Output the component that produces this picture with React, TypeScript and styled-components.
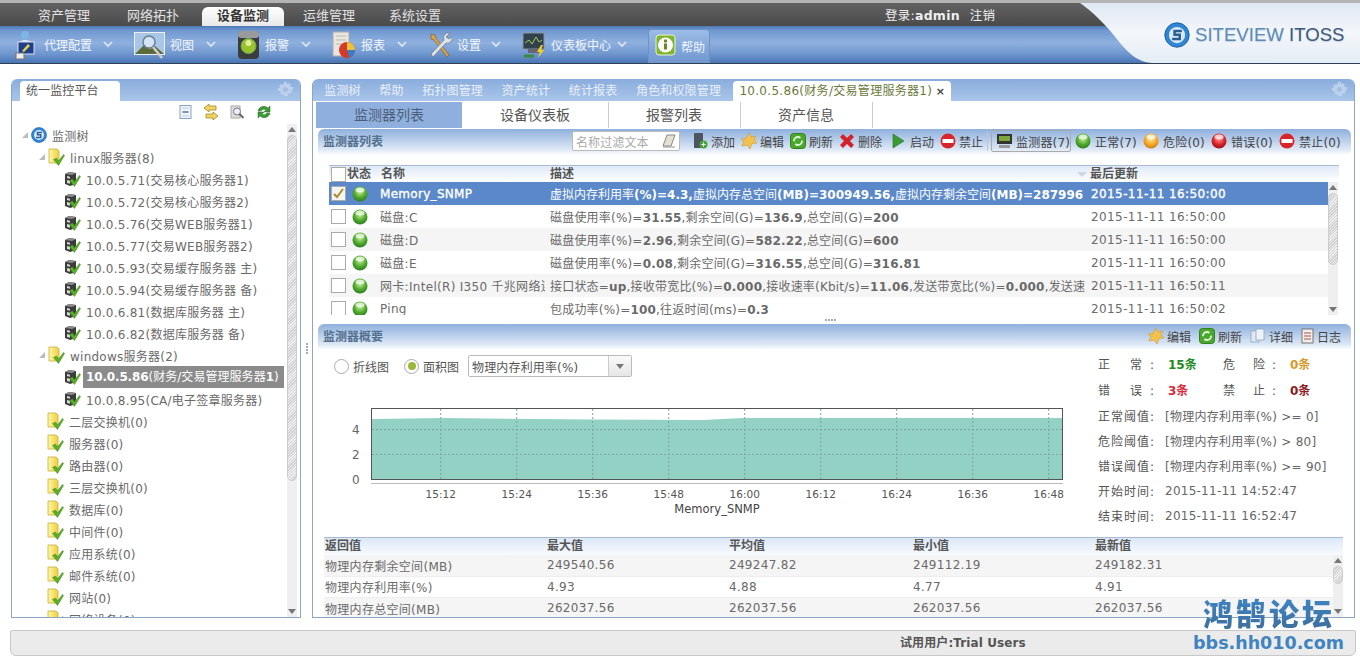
import React from 'react';
import styled, { createGlobalStyle } from 'styled-components';

const Global = createGlobalStyle`
  html, body { margin: 0; padding: 0; background: #fff; }
  body { font: 12px "DejaVu Sans", "Noto Sans CJK SC", sans-serif; color: #6a6a6a; letter-spacing: .25px; overflow: hidden; }
`;

const Page = styled.div`width: 1360px; height: 670px; position: relative; overflow: hidden; display: flex; flex-direction: column;`;
const Header = styled.header`height: 60px; margin-top: 3px; position: relative; display: flex; flex-direction: column; border-bottom: 1px solid #2f3f55; flex: none;`;
const TopStrip = styled.div`position: absolute; top: -3px; left: 0; right: 0; height: 3px; background: #b4b4b4;`;
const NavBar = styled.div`height: 23px; flex: none; background: linear-gradient(#626262, #4a4a4a); display: flex; align-items: flex-end; padding-left: 22px;`;
const NavTab = styled.div<{ $on?: boolean; $w?: number }>`
  width: ${p => p.$w ?? 82}px; text-align: center; line-height: 18px; font-size: 13px; letter-spacing: 0;
  color: ${p => (p.$on ? '#333' : '#e2e2e2')}; font-weight: ${p => (p.$on ? 600 : 400)};
  background: ${p => (p.$on ? 'linear-gradient(#fff,#e8e8e8)' : 'none')}; border-radius: ${p => (p.$on ? '6px 6px 0 0' : '0')};
  margin-left: ${p => (p.$on ? '2px' : '0')}; margin-right: ${p => (p.$on ? '4px' : '0')};
  padding-bottom: 2px; height: 17px;
`;
const NavUser = styled.div`margin-left: 425px; align-self: center; color: #eee; font-size: 12.5px; display: flex; gap: 10px; b { font-weight: 600; }`;
const ToolBar = styled.div`flex: 1; background: linear-gradient(#4e79b6 0%, #6f98d0 12%, #8fb0de 45%, #6f97cf 75%, #4a76b4 100%); display: flex; align-items: center; padding-left: 15px;`;
const ToolItem = styled.div<{ $w: number }>`width: ${p => p.$w}px; display: flex; align-items: center; color: #f2f6fc; gap: 5px; flex: none; letter-spacing: 0; svg { flex: none; }`;
const ToolText = styled.span`white-space: nowrap;`;
const ToolChevron = styled.span`margin-left: auto; margin-right: 21px; display: flex; color: #dfeaf8;`;
const HelpBtn = styled.div`height: 34px; width: 62px; margin-top: 2px; box-sizing: border-box; border: 1px solid #6b93c6; border-bottom: none; border-radius: 4px 4px 0 0; background: linear-gradient(#9cbbe6,#6f97cf); display: flex; align-items: center; gap: 5px; padding-left: 6px; color: #f2f6fc; letter-spacing: 0;`;
const LogoArea = styled.svg`position: absolute; right: 0; top: 0; width: 280px; height: 60px;`;
const LogoBlock = styled.div`position: absolute; left: 1164px; top: 19px; display: flex; align-items: center; gap: 5px;`;
const LogoText = styled.span`font: 18.6px "Liberation Sans", sans-serif; letter-spacing: 0; color: #5e8cb8; white-space: nowrap; text-shadow: 0 1px 1px #c6d2de; b { font-weight: 400; color: #3d5a78; }`;

const Main = styled.main`height: 539px; flex: none; margin-top: 15px; padding-left: 11px; display: flex;`;
const Panel = styled.section<{ $w: number }>`width: ${p => p.$w}px; box-sizing: border-box; border: 1px solid #8ea6c6; border-top: none; border-radius: 6px 6px 0 0; display: flex; flex-direction: column; overflow: hidden; flex: none;`;
const Strip = styled.div<{ $pad: number }>`height: 22px; flex: none; background: linear-gradient(#8aaddc, #a9c5ea); display: flex; align-items: flex-end; position: relative; border-radius: 6px 6px 0 0; margin: 0 -1px; padding-left: ${p => p.$pad}px;`;
const StripTab = styled.div`background: #fff; height: 20px; line-height: 21px; width: 88px; padding: 0 6px; border-radius: 4px 4px 0 0; color: #555; letter-spacing: .1px; white-space: nowrap;`;
const ActiveTab = styled(StripTab)`margin-left: 3px; color: #6a7a3a; width: 206px; letter-spacing: .3px; display: flex; justify-content: space-between; b { color: #444; font-size: 11px; }`;
const StripLink = styled.div`padding: 0 9.3px; height: 20px; line-height: 21px; letter-spacing: .15px; color: #e9f0fa; white-space: nowrap;`;
const GearSlot = styled.span`position: absolute; right: 8px; top: 3px; display: flex;`;
const TreeTools = styled.div`height: 22px; flex: none; display: flex; justify-content: flex-end; align-items: center; gap: 11px; padding-right: 28px;`;
const TreeBody = styled.div`flex: 1; display: flex; min-height: 0; padding-top: 1px;`;
const TreeList = styled.ul`flex: 1; list-style: none; margin: 0; padding: 0; overflow: hidden;`;
const TreeRow = styled.li<{ $lvl: number }>`height: 22px; display: flex; align-items: center; white-space: nowrap; padding-left: ${p => [10, 27, 51][p.$lvl]}px;`;
const Arrow = styled.span<{ $show?: boolean }>`width: 0; height: 0; flex: none; margin-right: ${p => (p.$show ? '1px' : '0')}; border-bottom: 6px solid #bbb; border-left: 6px solid transparent; visibility: ${p => (p.$show ? 'visible' : 'hidden')};`;
const TreeLabel = styled.span<{ $sel?: boolean }>`margin-left: 5px; ${p => (p.$sel ? 'margin-left:2px;padding:0 5px 0 3px;background:#8b8b8b;color:#fff;height:22px;line-height:22px;letter-spacing:.05px;b{font-weight:700;letter-spacing:-.15px;}' : '')}`;
const TreeIconSlot = styled.span<{ $lvl: number }>`display: flex; flex: none; margin-left: ${p => (p.$lvl === 2 ? '1px' : '2px')};`;
const VScroll = styled.div<{ $w: number; $mr?: number }>`width: ${p => p.$w}px; flex: none; background: #efefef; display: flex; flex-direction: column; align-items: center; position: relative; margin-right: ${p => p.$mr ?? 3}px;`;
const ScrollUp = styled.span`width: 0; height: 0; border: 4px solid transparent; border-top: none; border-bottom: 5px solid #777; margin: 3px 0;`;
const ScrollDown = styled.span`width: 0; height: 0; border: 4px solid transparent; border-bottom: none; border-top: 5px solid #777; margin: auto 0 3px;`;
const ScrollThumb = styled.span<{ $h: number }>`width: 100%; height: ${p => p.$h}px; border-radius: 5px; box-sizing: border-box; border: 1px solid #ccc; background: repeating-linear-gradient(135deg, #d0d0d0 0 1px, #f0f0f0 1px 2px);`;
const VSplit = styled.div`width: 11px; flex: none; display: flex; flex-direction: column; gap: 1px; align-items: center; justify-content: center; i { width: 2px; height: 2px; background: #aaa; }`;

const SubTabs = styled.div`flex: none; display: flex; padding: 1px 0 0 3px; box-sizing: border-box; height: 28px;`;
const SubTab = styled.div<{ $on?: boolean }>`padding: 0 38px; font-size: 14px; letter-spacing: 0; line-height: 27px; color: ${p => (p.$on ? '#4d5f78' : '#555')}; background: ${p => (p.$on ? '#8fb0de' : 'none')}; border-right: ${p => (p.$on ? 'none' : '1px solid #ccc')}; margin-right: ${p => (p.$on ? 0 : '-1px')}; height: 26px;`;
const SecBar = styled.div`height: 26px; flex: none; margin: 0 3px 0 5px; padding: 0 8px 0 5px; display: flex; align-items: center; border-radius: 6px 6px 0 0; background: linear-gradient(#8fb0de, #dfe9f6 80%, #fff); position: relative;`;
const SecTitle = styled.h3`margin: 0; font-size: 12px; font-weight: 700; letter-spacing: 0; color: #53708f; margin-top: -4px; flex: none; width: 249px;`;
const FilterBox = styled.div`width: 108px; height: 20px; box-sizing: border-box; margin-top: -2px; border: 1px solid #bbb; border-radius: 2px; background: #fff; display: flex; align-items: center; justify-content: space-between; padding: 0 2px 0 3px; color: #aaa; letter-spacing: .1px; flex: none; margin-right: 13px;`;
const Bar = styled.div`display: flex; align-items: center; gap: 6px; flex: none; margin-top: -2px;`;
const SideBar = styled(Bar)`margin-left: auto; gap: 8px; margin-right: 2px;`;
const BarBtn = styled.span`display: flex; align-items: center; gap: 3px; color: #444; letter-spacing: 0; white-space: nowrap;`;
const BarPlay = styled(BarBtn)`margin-left: 4px; gap: 5px;`;
const BarCount = styled(BarBtn)`letter-spacing: .2px; gap: 4px;`;
const BarSep = styled.i`width: 1px; height: 20px; background: #b8c6d8; margin: 0 0 0 -2px;`;
const BarBoxed = styled(BarBtn)`border: 1px solid #aaa; border-radius: 2px; padding: 2px 0 2px 4px; height: 16px; margin-left: -3px; margin-right: -2px; letter-spacing: .15px;`;

const GridWrap = styled.div`height: 150px; flex: none; margin: 10px 15px 0 16px; display: flex; flex-direction: column;`;
const GridHead = styled.div`height: 16px; flex: none; border-top: 1px solid #a9bbd2; background: linear-gradient(#dfe9f7,#fff); display: grid; grid-template-columns: 52px 169px 540px 1fr; color: #555; font-weight: 700; letter-spacing: 0; line-height: 16px; position: relative;`;
const HeadCheck = styled.span`display: flex; align-items: center; gap: 1px; padding-left: 2px;`;
const HeadBox = styled.i`width: 15px; height: 15px; box-sizing: border-box; border: 1px solid #aaa; background: #fff;`;
const SortMark = styled.i`position: absolute; left: 748px; top: 6px; width: 0; height: 0; border: 5px solid transparent; border-top: 5px solid #ccd6e4; border-bottom: none;`;
const GridBody = styled.div`flex: 1; display: flex; min-height: 0; overflow: hidden;`;
const GridRows = styled.div`flex: 1; overflow: hidden;`;
const DataRow = styled.div<{ $sel?: boolean; $alt?: boolean }>`height: 23px; display: grid; grid-template-columns: 51px 170px 540px 1fr; align-items: center; white-space: nowrap; background: ${p => (p.$sel ? '#5a88c8' : p.$alt ? '#f5f5f5' : '#fff')}; color: ${p => (p.$sel ? '#fff' : '#6a6a6a')}; letter-spacing: .3px;`;
const CheckCell = styled.span`display: flex; align-items: center; gap: 6px; padding-left: 2px;`;
const CheckBox = styled.span<{ $on?: boolean }>`width: 15px; height: 15px; box-sizing: border-box; border: 1px solid #aaa; background: ${p => (p.$on ? '#f4f4f4' : '#fff')}; display: flex; align-items: center; justify-content: center;`;
const NameCell = styled.span<{ $sel?: boolean }>`overflow: hidden; width: 165px; ${p => (p.$sel ? '-webkit-text-stroke: .35px #fff;' : '')}`;
const DescCell = styled.span<{ $sel?: boolean }>`overflow: hidden; width: 535px; letter-spacing: ${p => (p.$sel ? '0' : '.2px')}; b { font-weight: 700; }`;
const TimeCell = styled.span<{ $sel?: boolean }>`padding-left: 1px; letter-spacing: .4px; ${p => (p.$sel ? '-webkit-text-stroke: .35px #fff;' : '')}`;
const HSplitDots = styled.div`height: 9px; flex: none; display: flex; justify-content: center; gap: 1px; align-items: center; padding-right: 6px; i { width: 2px; height: 2px; background: #aaa; }`;
const Overview = styled.div`display: flex; flex: none; height: 187px; margin-right: 10px;`;
const ChartCol = styled.div`width: 775px; flex: none; padding: 4px 0 0 21px; box-sizing: border-box;`;
const RadioRow = styled.div`display: flex; align-items: center; height: 24px; color: #555; letter-spacing: 0;`;
const Radio = styled.span<{ $on?: boolean }>`width: 15px; height: 15px; box-sizing: border-box; border: 1px solid #aaa; border-radius: 50%; background: #fff; margin-right: 4px; position: relative; flex: none; display: flex; align-items: center; justify-content: center; &::after { content: ''; width: 8px; height: 8px; border-radius: 50%; background: ${p => (p.$on ? '#9bb83c' : 'transparent')}; }`;
const RadioLabel = styled.span`margin-right: 15px;`;
const SelectBox = styled.div`width: 164px; height: 22px; box-sizing: border-box; border: 1px solid #bbb; border-radius: 2px; display: flex; align-items: center; justify-content: space-between; padding-left: 3px; letter-spacing: .15px; color: #555; margin-left: -6px;`;
const SelectBtn = styled.span`width: 22px; height: 100%; border-left: 1px solid #ccc; background: linear-gradient(#fafafa,#e6e6e6); display: flex; align-items: center; justify-content: center; &::after { content: ''; border: 4px solid transparent; border-top: 5px solid #777; border-bottom: none; }`;
const ChartSvg = styled.svg`display: block; margin: 22px 0 0 -11px;`;
const Stats = styled.div`flex: 1; padding: 0 0 0 10px; letter-spacing: .2px;`;
const StatRow = styled.div<{ $h: number }>`height: ${p => p.$h}px; display: flex; align-items: center; white-space: nowrap; color: #555;`;
const StatLabel = styled.span<{ $w?: number }>`width: ${p => p.$w ?? 56}px; text-align-last: justify; flex: none; letter-spacing: 0;`;
const StatValue = styled.span<{ $c: string }>`width: 55px; margin-left: 14px; color: ${p => p.$c}; font-weight: 700; flex: none; letter-spacing: 0;`;
const StatText = styled.span`margin-left: 11px; color: #666; letter-spacing: .25px;`;

const RetWrap = styled.div`flex: 1; margin: 0 11px; display: flex; flex-direction: column; min-height: 0;`;
const RetHead = styled.div`height: 17px; flex: none; border-top: 1px solid #a9bbd2; background: linear-gradient(#dce7f6,#f8fbff); display: grid; grid-template-columns: 222px 182px 184px 182px 1fr; color: #555; font-weight: 700; letter-spacing: 0; line-height: 17px; padding-left: 1px;`;
const RetBody = styled.div`flex: 1; display: flex; overflow: hidden;`;
const RetRows = styled.div`flex: 1;`;
const RetRow = styled.div<{ $alt?: boolean }>`height: 21.5px; display: grid; grid-template-columns: 222px 182px 184px 182px 1fr; align-items: center; padding-left: 1px; background: ${p => (p.$alt ? '#f5f5f5' : '#fff')}; border-bottom: 1px solid #eee; box-sizing: border-box; letter-spacing: .3px; white-space: nowrap;`;

const Footer = styled.footer`margin: 12px 0 0 10px; width: 1346px; height: 26px; flex: none; box-sizing: border-box; background: #ebebeb; border: 1px solid #c8c8c8; border-radius: 2px 2px 6px 6px; display: flex; align-items: center; padding: 0 0 3px 889px; color: #555; font-weight: 600; letter-spacing: .1px;`;
const Watermark = styled.div`position: absolute; left: 1192px; top: 594px; width: 154px; text-align: center; letter-spacing: 0; pointer-events: none;`;
const WaterTitle = styled.div`font: 900 30px/36px "Noto Sans CJK SC", sans-serif; letter-spacing: 3px; background: linear-gradient(#3f86c6, #3d6f9d); -webkit-background-clip: text; background-clip: text; -webkit-text-fill-color: transparent;`;
const WaterUrl = styled.div`font: 700 17.5px/22px "DejaVu Sans", sans-serif; color: #3f84c0; letter-spacing: 0; white-space: nowrap; margin-top: 2px; margin-left: -1px;`;

const Orb = ({ c = 'green', s = 16 }: { c?: 'green' | 'orange' | 'red'; s?: number }) => {
  const m = { green: ['#c9f09a', '#4faa2e', '#2f7d22'], orange: ['#ffe9a0', '#f4a92a', '#d07a12'], red: ['#ff9c9c', '#d9252c', '#9d1219'] }[c];
  return (
    <svg width={s} height={s} viewBox="0 0 16 16">
      <defs><radialGradient id={`orb-${c}`} cx=".5" cy=".35" r=".65"><stop offset="0" stopColor={m[0]} /><stop offset=".6" stopColor={m[1]} /><stop offset="1" stopColor={m[2]} /></radialGradient></defs>
      <circle cx="8" cy="8" r="7.5" fill={`url(#orb-${c})`} />
      <ellipse cx="8" cy="4" rx="4.5" ry="2.5" fill="#fff" opacity=".7" />
    </svg>
  );
};
const Check = ({ x = 0, y = 0 }: { x?: number; y?: number }) => <path transform={`translate(${x} ${y})`} d="M0 5 L3 3.5 L5 6.5 L10 0 L11 1 L5 11 Z" fill="#5cad2a" stroke="#3f8a1c" strokeWidth=".5" />;
const FolderCheck = () => (
  <svg width="17" height="18" viewBox="0 0 17 18"><defs><linearGradient id="fld" x1="0" x2="1"><stop offset="0" stopColor="#fff7a8" /><stop offset="1" stopColor="#eecf3c" /></linearGradient></defs>
    <path d="M1 1h8l2 2v12H1z" fill="url(#fld)" stroke="#c9ad3a" strokeWidth=".8" /><Check x={5.5} y={6.5} /></svg>
);
const ServerCheck = () => (
  <svg width="17" height="16" viewBox="0 0 17 16"><path d="M1 3l4-2 7 1v7l-3 5-3 1-5-2z" fill="#3c3c3c" /><path d="M5 1l7 1-4 2-7-1z" fill="#8c8c8c" /><path d="M3 5l3 .7v2L3 7zM3 9l3 .7v3L3 12z" fill="#d8d8d8" /><Check x={5.5} y={4.5} /></svg>
);
const RootIcon = ({ s = 16 }: { s?: number }) => (
  <svg width={s} height={s} viewBox="0 0 16 16"><circle cx="8" cy="8" r="7.5" fill="#2f86d4" stroke="#1a5fa3" strokeWidth=".6" /><circle cx="8" cy="8" r="5" fill="#dbe9f7" /><path d="M11 5.5H6.5v2.3h3.2v2.7H5" fill="none" stroke="#2a5f96" strokeWidth="1.5" /></svg>
);
const Gear = () => (
  <svg width="15" height="15" viewBox="0 0 15 15"><path d="M6 0h3v2l2-1 2 2-1 2h3v3h-2l1 2-2 2-2-1v3H6v-2l-2 1-2-2 1-2H0V6h2L1 4l2-2 2 1z" fill="#c7d8ef" opacity=".75" /><circle cx="7.5" cy="7.5" r="2.5" fill="#a3bfe4" /></svg>
);
const Collapse = () => (<svg width="13" height="14" viewBox="0 0 13 14"><rect x="1" y=".5" width="11" height="13" fill="#eef3fa" stroke="#8aa3c2" /><path d="M3.5 7h6" stroke="#4f78a8" strokeWidth="1.4" /><path d="M3 3h7M3 11h7" stroke="#c2d0e2" /></svg>);
const Swap = () => (<svg width="16" height="18" viewBox="0 0 16 18"><path d="M6 1L1 5l5 4V7h7V3H6zM10 9l5 4-5 4v-2H3v-4h7z" fill="#f0d468" stroke="#a68a22" strokeWidth=".8" /></svg>);
const Seek = () => (<svg width="15" height="15" viewBox="0 0 15 15"><rect x="1" y="1" width="9" height="12" fill="#ddd" stroke="#aaa" /><circle cx="7" cy="6.5" r="3.5" fill="#eef" stroke="#777" /><path d="M9.5 9l4 4" stroke="#666" strokeWidth="2" /></svg>);
const RefreshRound = () => (<svg width="16" height="16" viewBox="0 0 16 16"><path d="M2 7a6 6 0 0 1 10-3l2-2v6H8l2-2a3.4 3.4 0 0 0-5 1zM14 9a6 6 0 0 1-10 3l-2 2V8h6l-2 2a3.4 3.4 0 0 0 5-1z" fill="#3d9a38" stroke="#2a7226" strokeWidth=".5" /></svg>);
const RefreshBox = () => (<svg width="16" height="16" viewBox="0 0 16 16"><rect x=".5" y=".5" width="15" height="15" rx="3" fill="#4aa82e" stroke="#357f20" /><circle cx="8" cy="8" r="4" fill="none" stroke="#e3f5d8" strokeWidth="1.8" strokeDasharray="9 3" /></svg>);
const Add = () => (<svg width="15" height="16" viewBox="0 0 15 16"><rect x="1" y="0" width="9" height="15" rx="1" fill="#4d5560" /><circle cx="10.5" cy="11.5" r="4" fill="#45a53a" /><path d="M8.5 11.5h4M10.5 9.5v4" stroke="#fff" /></svg>);
const Edit = () => (<svg width="16" height="16" viewBox="0 0 16 16"><path d="M8 0l2 4 5-1-2 4 3 3-5 .5L9 16l-3-4-5 1 2-4.5L0 6l5-.5z" fill="#f2c24d" stroke="#c8922a" strokeWidth=".5" /></svg>);
const Cross = () => (<svg width="16" height="14" viewBox="0 0 16 14"><path d="M1 3l3-3 4 4 4-4 3 3-4 4 4 4-3 3-4-4-4 4-3-3 4-4z" fill="#d2232a" /></svg>);
const Play = () => (<svg width="13" height="16" viewBox="0 0 13 16"><path d="M1 1l11 7-11 7z" fill="#3a9a33" stroke="#2a7424" strokeWidth=".6" /></svg>);
const Ban = () => (<svg width="16" height="16" viewBox="0 0 16 16"><circle cx="8" cy="8" r="7.5" fill="#d8252c" /><rect x="2.5" y="6" width="11" height="4" fill="#fff" /></svg>);
const Mon = () => (<svg width="17" height="16" viewBox="0 0 17 16"><rect x="1" y="1" width="15" height="10" fill="#333" /><rect x="3" y="3" width="11" height="5" fill="#7ea63c" /><rect x="3" y="12" width="11" height="3" fill="#999" /></svg>);
const Eraser = () => (<svg width="15" height="14" viewBox="0 0 15 14"><path d="M5 1h8L9 12H1z" fill="#e4e0d2" stroke="#888" /><path d="M1 13h12" stroke="#999" /></svg>);
const Detail = () => (<svg width="16" height="16" viewBox="0 0 16 16"><rect x="1" y="3" width="8" height="11" fill="#dfe8f3" stroke="#9ab2cc" /><rect x="6" y="1" width="8" height="11" fill="#eef3f9" stroke="#9ab2cc" /></svg>);
const Log = () => (<svg width="13" height="16" viewBox="0 0 13 16"><rect x="1" y="1" width="11" height="14" fill="#eee" stroke="#777" /><path d="M3 5h7M3 8h7M3 11h7" stroke="#b8523a" /></svg>);

const IAgent = () => (<svg width="24" height="30" viewBox="0 0 24 30"><circle cx="10" cy="5" r="4" fill="#7db5e8" /><path d="M3 18c0-6 3-8 7-8s8 2 9 6z" fill="#d9e6f4" /><rect x="3" y="12" width="16" height="12" fill="#1d3f8c" stroke="#dde" /><path d="M7 21l6-7 2 2-6 6z" fill="#e8d24a" /><rect x="1" y="23" width="8" height="6" fill="#eee" stroke="#777" /></svg>);
const IView = () => (<svg width="31" height="30" viewBox="0 0 31 30"><rect x=".5" y="2.5" width="30" height="22" fill="#a7c6e8" stroke="#eee" /><path d="M1 24l9-9 6 4 5-3 9 8z" fill="#5d6a3c" /><circle cx="15" cy="12" r="6" fill="#d4e4f4" stroke="#6c7f93" strokeWidth="1.5" /><path d="M19 17l9 11" stroke="#ccc" strokeWidth="2.5" /></svg>);
const IAlarm = () => (<svg width="23" height="30" viewBox="0 0 23 30"><rect x="1" y="1" width="21" height="28" rx="4" fill="#3c3c3c" /><rect x="1" y="1" width="21" height="7" rx="3" fill="#9a9a9a" /><circle cx="11.5" cy="16" r="7.5" fill="#9ac22a" stroke="#6a6" /><circle cx="11.5" cy="13" r="3" fill="#dcee9c" /></svg>);
const IReport = () => (<svg width="24" height="28" viewBox="0 0 24 28"><rect x="1" y="1" width="16" height="24" fill="#eae6df" stroke="#aaa" /><path d="M4 5h10M4 9h10M4 13h6" stroke="#bbb" /><circle cx="15" cy="19" r="8" fill="#d53a28" /><path d="M15 19V11a8 8 0 0 1 8 8z" fill="#e9c43a" /><path d="M15 19h8a8 8 0 0 1-6 7.6z" fill="#3f7ac2" /></svg>);
const ITools = () => (<svg width="24" height="28" viewBox="0 0 24 28"><path d="M3 3l4 1 1 3 13 17-2 2L6 9 3 8z" fill="#d8a24a" stroke="#7a5a2a" strokeWidth=".6" /><path d="M22 2a5 5 0 0 0-6 7L3 23l2 3L18 12a5 5 0 0 0 6-6l-3 2-3-2z" fill="#dfe3e8" stroke="#6a7480" strokeWidth=".7" /></svg>);
const IDash = () => (<svg width="24" height="26" viewBox="0 0 24 26"><rect x="1" y="1" width="21" height="16" fill="#33404e" stroke="#8895a5" /><path d="M3 11l4-3 3 4 4-7 3 5 3-2" fill="none" stroke="#9fd14a" /><rect x="6" y="17" width="11" height="4" fill="#667" /><path d="M2 24h10" stroke="#3a8a3a" strokeWidth="3" /><path d="M19 13l-4 7h3l-2 6 6-8h-3l2-5z" fill="#f5d11f" /></svg>);
const IInfo = () => (<svg width="21" height="24" viewBox="0 0 21 24"><rect x="1" y="1" width="19" height="20" rx="3" fill="#7fb62e" stroke="#eaf2d8" /><circle cx="10.5" cy="11" r="7.5" fill="#fff" /><rect x="9" y="9.5" width="3" height="6" fill="#5d8e1f" /><circle cx="10.5" cy="7" r="1.7" fill="#5d8e1f" /></svg>);
const Chev = () => (<svg width="10" height="7" viewBox="0 0 10 7"><path d="M1 1l4 4 4-4" fill="none" stroke="currentColor" strokeWidth="1.6" /></svg>);

const TOOLS: [React.ReactNode, string, number][] = [
  [<IAgent key="a" />, '代理配置', 119],
  [<IView key="b" />, '视图', 103],
  [<IAlarm key="c" />, '报警', 95],
  [<IReport key="d" />, '报表', 96],
  [<ITools key="e" />, '设置', 94],
  [<IDash key="f" />, '仪表板中心', 126],
];

const TREE: { l: number; t: React.ReactNode; k: string; arrow?: boolean; icon: 'root' | 'f' | 's'; sel?: boolean }[] = [
  { l: 0, k: 'r', t: '监测树', arrow: true, icon: 'root' },
  { l: 1, k: 'a', t: 'linux服务器(8)', arrow: true, icon: 'f' },
  { l: 2, k: 'b', t: '10.0.5.71(交易核心服务器1)', icon: 's' },
  { l: 2, k: 'c', t: '10.0.5.72(交易核心服务器2)', icon: 's' },
  { l: 2, k: 'd', t: '10.0.5.76(交易WEB服务器1)', icon: 's' },
  { l: 2, k: 'e', t: '10.0.5.77(交易WEB服务器2)', icon: 's' },
  { l: 2, k: 'f', t: '10.0.5.93(交易缓存服务器 主)', icon: 's' },
  { l: 2, k: 'g', t: '10.0.5.94(交易缓存服务器 备)', icon: 's' },
  { l: 2, k: 'h', t: '10.0.6.81(数据库服务器 主)', icon: 's' },
  { l: 2, k: 'i', t: '10.0.6.82(数据库服务器 备)', icon: 's' },
  { l: 1, k: 'j', t: 'windows服务器(2)', arrow: true, icon: 'f' },
  { l: 2, k: 'k', t: <><b>10.0.5.86</b>(财务/交易管理服务器<b>1</b>)</>, icon: 's', sel: true },
  { l: 2, k: 'l', t: '10.0.8.95(CA/电子签章服务器)', icon: 's' },
  { l: 1, k: 'm', t: '二层交换机(0)', icon: 'f' },
  { l: 1, k: 'n', t: '服务器(0)', icon: 'f' },
  { l: 1, k: 'o', t: '路由器(0)', icon: 'f' },
  { l: 1, k: 'p', t: '三层交换机(0)', icon: 'f' },
  { l: 1, k: 'q', t: '数据库(0)', icon: 'f' },
  { l: 1, k: 's', t: '中间件(0)', icon: 'f' },
  { l: 1, k: 't', t: '应用系统(0)', icon: 'f' },
  { l: 1, k: 'u', t: '邮件系统(0)', icon: 'f' },
  { l: 1, k: 'v', t: '网站(0)', icon: 'f' },
  { l: 1, k: 'w', t: '网络设备(0)', icon: 'f' },
];

const MON: { n: string; d: React.ReactNode; t: string }[] = [
  { n: 'Memory_SNMP', d: <>虚拟内存利用率<b>(%)=4.3,</b>虚拟内存总空间<b>(MB)=300949.56,</b>虚拟内存剩余空间<b>(MB)=287996</b></>, t: '2015-11-11 16:50:00' },
  { n: '磁盘:C', d: <>磁盘使用率(%)=<b>31.55</b>,剩余空间(G)=<b>136.9</b>,总空间(G)=<b>200</b></>, t: '2015-11-11 16:50:00' },
  { n: '磁盘:D', d: <>磁盘使用率(%)=<b>2.96</b>,剩余空间(G)=<b>582.22</b>,总空间(G)=<b>600</b></>, t: '2015-11-11 16:50:00' },
  { n: '磁盘:E', d: <>磁盘使用率(%)=<b>0.08</b>,剩余空间(G)=<b>316.55</b>,总空间(G)=<b>316.81</b></>, t: '2015-11-11 16:50:00' },
  { n: '网卡:Intel(R) I350 千兆网络连接', d: <>接口状态=<b>up</b>,接收带宽比(%)=<b>0.000</b>,接收速率(Kbit/s)=<b>11.06</b>,发送带宽比(%)=<b>0.000</b>,发送速率</>, t: '2015-11-11 16:50:11' },
  { n: 'Ping', d: <>包成功率(%)=<b>100</b>,往返时间(ms)=<b>0.3</b></>, t: '2015-11-11 16:50:02' },
];
const RET = [
  ['物理内存剩余空间(MB)', '249540.56', '249247.82', '249112.19', '249182.31'],
  ['物理内存利用率(%)', '4.93', '4.88', '4.77', '4.91'],
  ['物理内存总空间(MB)', '262037.56', '262037.56', '262037.56', '262037.56'],
];
const TICKS = ['15:12', '15:24', '15:36', '15:48', '16:00', '16:12', '16:24', '16:36', '16:48'];

export default function App() {
  return (
    <Page>
      <Global />
      <Header>
        <TopStrip />
        <NavBar>
          <NavTab $w={84}>资产管理</NavTab>
          <NavTab $w={94}>网络拓扑</NavTab>
          <NavTab $on>设备监测</NavTab>
          <NavTab>运维管理</NavTab>
          <NavTab $w={90}>系统设置</NavTab>
          <NavUser><span>登录:<b>admin</b></span><span>注销</span></NavUser>
        </NavBar>
        <ToolBar>
          {TOOLS.map(([ic, t, w]) => (
            <ToolItem key={t} $w={w}>{ic}<ToolText>{t}</ToolText><ToolChevron><Chev /></ToolChevron></ToolItem>
          ))}
          <HelpBtn><IInfo /><span>帮助</span></HelpBtn>
        </ToolBar>
        <LogoArea viewBox="0 0 280 60">
          <defs><linearGradient id="lg" x1="0" y1="0" x2="0" y2="1"><stop offset="0" stopColor="#dfe8f2" /><stop offset=".5" stopColor="#f4f7fb" /><stop offset="1" stopColor="#e4ecf5" /></linearGradient></defs>
          <path d="M0 0C14 10 24 20 36 35S58 60 74 60H280V0z" fill="url(#lg)" />
        </LogoArea>
        <LogoBlock>
          <RootIcon s={26} />
          <LogoText>SITEVIEW <b>ITOSS</b></LogoText>
        </LogoBlock>
      </Header>

      <Main>
        <Panel $w={290}>
          <Strip $pad={9}>
            <StripTab>统一监控平台</StripTab>
            <GearSlot><Gear /></GearSlot>
          </Strip>
          <TreeTools><Collapse /><Swap /><Seek /><RefreshRound /></TreeTools>
          <TreeBody>
            <TreeList>
              {TREE.map(n => (
                <TreeRow key={n.k} $lvl={n.l}>
                  {n.l < 2 && <Arrow $show={n.arrow} />}
                  <TreeIconSlot $lvl={n.l}>{n.icon === 'root' ? <RootIcon /> : n.icon === 'f' ? <FolderCheck /> : <ServerCheck />}</TreeIconSlot>
                  <TreeLabel $sel={n.sel}>{n.t}</TreeLabel>
                </TreeRow>
              ))}
            </TreeList>
            <VScroll $w={10}><ScrollUp /><ScrollThumb $h={346} /><ScrollDown /></VScroll>
          </TreeBody>
        </Panel>
        <VSplit><i /><i /><i /><i /></VSplit>
        <Panel $w={1043}>
          <Strip $pad={3}>
            {['监测树', '帮助', '拓扑图管理', '资产统计', '统计报表', '角色和权限管理'].map(t => <StripLink key={t}>{t}</StripLink>)}
            <ActiveTab><span>10.0.5.86(财务/交易管理服务器1)</span><b>×</b></ActiveTab>
            <GearSlot><Gear /></GearSlot>
          </Strip>
          <SubTabs>
            <SubTab $on>监测器列表</SubTab>
            <SubTab>设备仪表板</SubTab>
            <SubTab>报警列表</SubTab>
            <SubTab>资产信息</SubTab>
          </SubTabs>
          <SecBar>
            <SecTitle>监测器列表</SecTitle>
            <FilterBox>名称过滤文本<Eraser /></FilterBox>
            <Bar>
              <BarBtn><Add />添加</BarBtn>
              <BarBtn><Edit />编辑</BarBtn>
              <BarBtn><RefreshBox />刷新</BarBtn>
              <BarBtn><Cross />删除</BarBtn>
              <BarPlay><Play />启动</BarPlay>
              <BarBtn><Ban />禁止</BarBtn>
              <BarSep />
              <BarBoxed><Mon />监测器(7)</BarBoxed>
              <BarCount><Orb />正常(7)</BarCount>
              <BarCount><Orb c="orange" />危险(0)</BarCount>
              <BarCount><Orb c="red" />错误(0)</BarCount>
              <BarCount><Ban />禁止(0)</BarCount>
            </Bar>
          </SecBar>
          <GridWrap>
            <GridHead>
              <HeadCheck><HeadBox />状态</HeadCheck><span>名称</span><span>描述</span><span>最后更新</span><SortMark />
            </GridHead>
            <GridBody>
              <GridRows>
                {MON.map((r, i) => (
                  <DataRow key={r.n} $sel={i === 0} $alt={i === 2 || i === 4}>
                    <CheckCell>
                      <CheckBox $on={i === 0}>{i === 0 && <svg width="11" height="11" viewBox="0 0 11 11"><path d="M1 6l3 3 6-8" fill="none" stroke="#a98a1e" strokeWidth="2" /></svg>}</CheckBox>
                      <Orb />
                    </CheckCell>
                    <NameCell $sel={i === 0}>{r.n}</NameCell>
                    <DescCell $sel={i === 0}>{r.d}</DescCell>
                    <TimeCell $sel={i === 0}>{r.t}</TimeCell>
                  </DataRow>
                ))}
              </GridRows>
              <VScroll $w={10} $mr={1}><ScrollUp /><ScrollThumb $h={72} /><ScrollDown /></VScroll>
            </GridBody>
          </GridWrap>
          <HSplitDots><i /><i /><i /><i /></HSplitDots>
          <SecBar>
            <SecTitle>监测器概要</SecTitle>
            <SideBar>
              <BarBtn><Edit />编辑</BarBtn>
              <BarBtn><RefreshBox />刷新</BarBtn>
              <BarBtn><Detail />详细</BarBtn>
              <BarBtn><Log />日志</BarBtn>
            </SideBar>
          </SecBar>
          <Overview>
            <ChartCol>
              <RadioRow>
                <Radio /><RadioLabel>折线图</RadioLabel>
                <Radio $on /><RadioLabel>面积图</RadioLabel>
                <SelectBox>物理内存利用率(%)<SelectBtn /></SelectBox>
              </RadioRow>
              <ChartSvg width="767" height="120" viewBox="0 0 767 120">
                <rect x="48.5" y="8.5" width="691" height="71" fill="#fff" stroke="#555" />
                <path d="M49 19 L120 18 L270 19.5 L380 20 L420 18 L739 18 V79 H49 Z" fill="#92d1c4" />
                <g stroke="#7aa69e" strokeDasharray="2 2">
                  {TICKS.map((t, i) => <line key={t} x1={117.7 + i * 76} x2={117.7 + i * 76} y1="9" y2="79" />)}
                  <line x1="49" x2="739" y1="29.5" y2="29.5" />
                  <line x1="49" x2="739" y1="54.5" y2="54.5" />
                </g>
                <line x1="48" x2="740" y1="83.5" y2="83.5" stroke="#bbb" />
                <g fontFamily="DejaVu Sans" fontSize="12" fill="#666" textAnchor="end">
                  <text x="37" y="34">4</text><text x="37" y="59">2</text><text x="37" y="84">0</text>
                </g>
                <g fontFamily="DejaVu Sans" fontSize="10.5" fill="#555" textAnchor="middle" letterSpacing="0">
                  {TICKS.map((t, i) => <text key={t} x={117.7 + i * 76} y="98">{t}</text>)}
                </g>
                <text x="394" y="113" fontFamily="DejaVu Sans" fontSize="11.5" fill="#444" textAnchor="middle" letterSpacing="0">Memory_SNMP</text>
              </ChartSvg>
            </ChartCol>
            <Stats>
              <StatRow $h={26}><StatLabel>正 常:</StatLabel><StatValue $c="#1f8a1f">15条</StatValue><StatLabel $w={53}>危 险:</StatLabel><StatValue $c="#d89a2a">0条</StatValue></StatRow>
              <StatRow $h={27}><StatLabel>错 误:</StatLabel><StatValue $c="#d8283a">3条</StatValue><StatLabel $w={53}>禁 止:</StatLabel><StatValue $c="#8e1a22">0条</StatValue></StatRow>
              <StatRow $h={25}><StatLabel>正常阈值:</StatLabel><StatText>[物理内存利用率(%) &gt;= 0]</StatText></StatRow>
              <StatRow $h={25}><StatLabel>危险阈值:</StatLabel><StatText>[物理内存利用率(%) &gt; 80]</StatText></StatRow>
              <StatRow $h={25}><StatLabel>错误阈值:</StatLabel><StatText>[物理内存利用率(%) &gt;= 90]</StatText></StatRow>
              <StatRow $h={25}><StatLabel>开始时间:</StatLabel><StatText>2015-11-11 14:52:47</StatText></StatRow>
              <StatRow $h={25}><StatLabel>结束时间:</StatLabel><StatText>2015-11-11 16:52:47</StatText></StatRow>
            </Stats>
          </Overview>
          <RetWrap>
            <RetHead><span>返回值</span><span>最大值</span><span>平均值</span><span>最小值</span><span>最新值</span></RetHead>
            <RetBody>
              <RetRows>
                {RET.map((r, i) => (
                  <RetRow key={r[0]} $alt={i !== 1}>{r.map((c, j) => <span key={j}>{c}</span>)}</RetRow>
                ))}
              </RetRows>
              <VScroll $w={10} $mr={0}><ScrollUp /><ScrollThumb $h={18} /><ScrollDown /></VScroll>
            </RetBody>
          </RetWrap>
        </Panel>
      </Main>
      <Footer>试用用户:Trial Users</Footer>
      <Watermark>
        <WaterTitle>鸿鹄论坛</WaterTitle>
        <WaterUrl>bbs.hh010.com</WaterUrl>
      </Watermark>
    </Page>
  );
}
